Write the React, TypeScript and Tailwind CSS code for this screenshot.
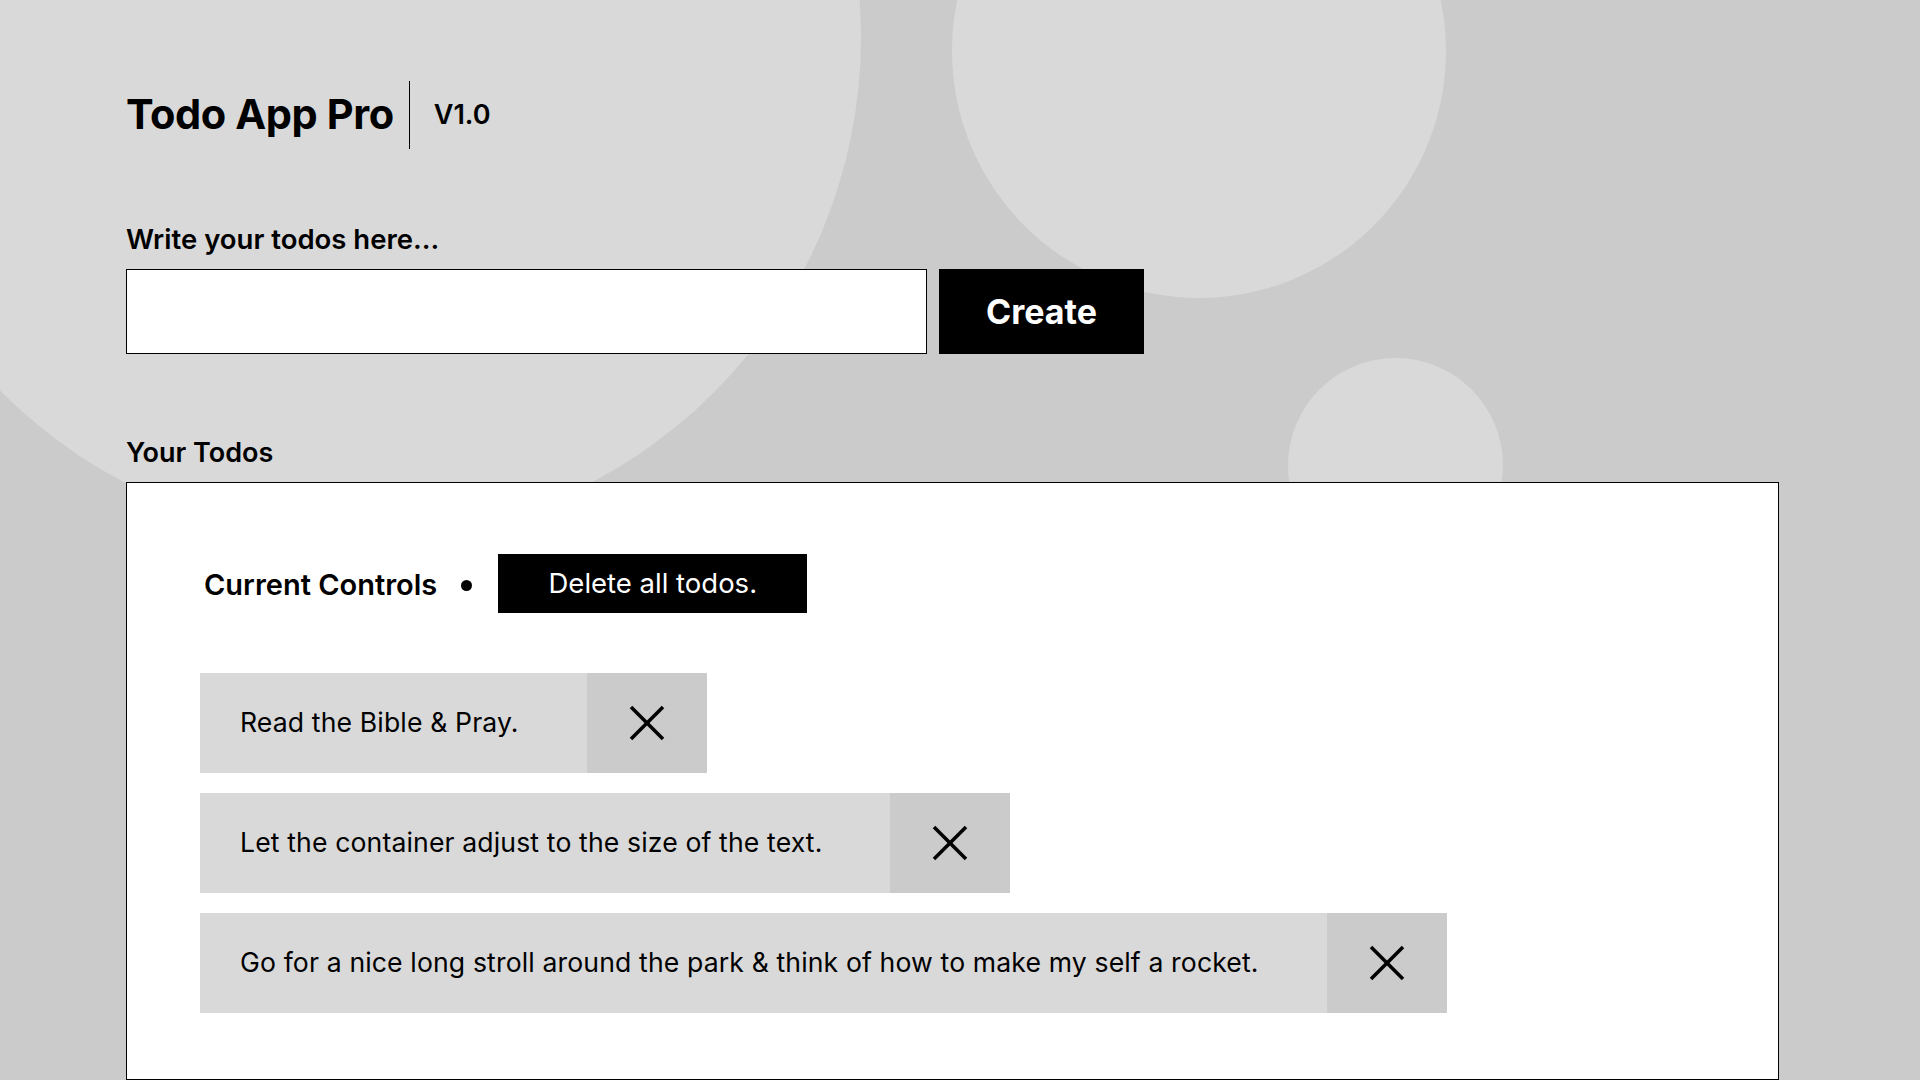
import { useState } from "react";

type Todo = {
  id: number;
  text: string;
};

const todosIniciais: Todo[] = [
  { id: 1, text: "Read the Bible & Pray." },
  { id: 2, text: "Let the container adjust to the size of the text." },
  {
    id: 3,
    text: "Go for a nice long stroll around the park & think of how to make my self a rocket.",
  },
];

function XIcon() {
  return (
    <svg width="36" height="36" viewBox="0 0 36 36" fill="none">
      <line x1="2" y1="2" x2="34" y2="34" stroke="black" strokeWidth="3.5" />
      <line x1="34" y1="2" x2="2" y2="34" stroke="black" strokeWidth="3.5" />
    </svg>
  );
}

function App() {
  const [todos, setTodos] = useState<Todo[]>(todosIniciais);
  const [texto, setTexto] = useState("");

  function criarTodo() {
    if (!texto.trim()) return;
    setTodos([...todos, { id: Date.now(), text: texto.trim() }]);
    setTexto("");
  }

  function removerTodo(id: number) {
    setTodos(todos.filter((todo) => todo.id !== id));
  }

  return (
    <div className="relative h-[1080px] overflow-hidden bg-[#cbcbcb] font-['Inter',sans-serif] text-black">
      {/* decorative circles */}
      <div className="absolute left-[-145px] top-[-466px] h-[1006px] w-[1006px] rounded-full bg-[#d9d9d9]" />
      <div className="absolute left-[952px] top-[-196px] h-[494px] w-[494px] rounded-full bg-[#d9d9d9]" />
      <div className="absolute left-[1288px] top-[358px] h-[215px] w-[215px] rounded-full bg-[#d9d9d9]" />

      <div className="relative pl-[126px] pt-[81px]">
        <header className="flex items-center">
          <h1 className="text-[41.5px] font-bold leading-none tracking-[-0.01em]">
            Todo App Pro
          </h1>
          <div className="ml-[15px] h-[68px] w-px bg-black" />
          <span className="ml-[24px] text-[27px] font-semibold">V1.0</span>
        </header>

        <p className="mt-[75px] text-[27.5px] font-semibold leading-[31px]">
          Write your todos here...
        </p>

        <div className="mt-[14px] flex">
          <input
            value={texto}
            onChange={(e) => setTexto(e.target.value)}
            className="h-[85px] w-[801px] border border-black bg-white px-5 text-[26px] outline-none"
          />
          <button
            onClick={criarTodo}
            className="ml-[12px] h-[85px] w-[205px] bg-black text-[34px] font-bold text-white"
          >
            Create
          </button>
        </div>

        <p className="mt-[83px] text-[27px] font-semibold leading-[31px]">
          Your Todos
        </p>

        <section className="mt-[14px] h-[598px] w-[1653px] border border-black bg-white pl-[73px] pt-[71px]">
          <div className="ml-[4px] flex items-center">
            <span className="pt-[1px] text-[29px] font-semibold leading-none">
              Current Controls
            </span>
            <span className="ml-[24px] mt-[4px] h-[11px] w-[11px] rounded-full bg-black" />
            <button
              onClick={() => setTodos([])}
              className="ml-[26px] h-[59px] w-[309px] bg-black text-[27.5px] text-white"
            >
              Delete all todos.
            </button>
          </div>

          <div className="mt-[60px] flex flex-col items-start gap-[20px]">
            {todos.map((todo) => (
              <div key={todo.id} className="flex h-[100px] bg-[#d9d9d9]">
                <p className="flex items-center pl-[40px] pr-[68px] text-[26.6px] tracking-[0.005em]">
                  {todo.text}
                </p>
                <button
                  onClick={() => removerTodo(todo.id)}
                  className="flex w-[120px] items-center justify-center bg-[#cbcbcb]"
                >
                  <XIcon />
                </button>
              </div>
            ))}
          </div>
        </section>
      </div>
    </div>
  );
}

export default App;
